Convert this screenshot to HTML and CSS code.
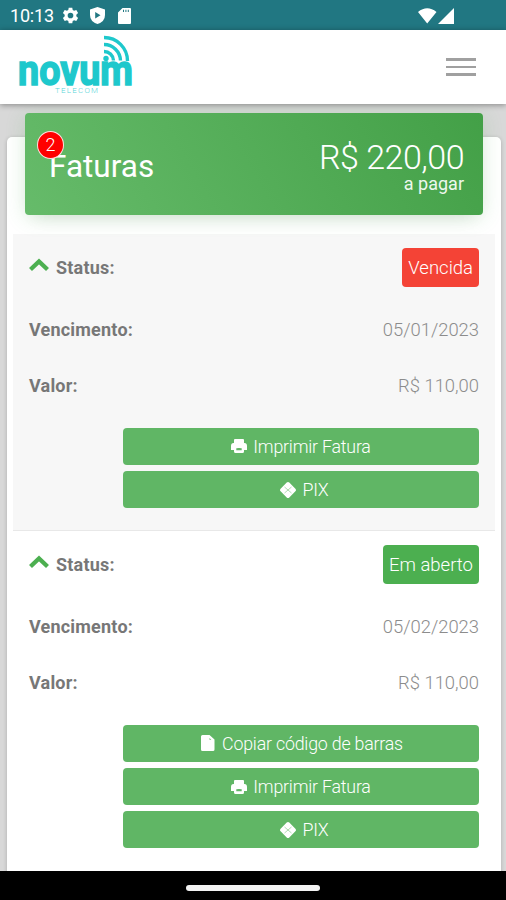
FILE: index.html
```html
<!DOCTYPE html>
<html lang="pt-BR">
<head>
<meta charset="utf-8">
<title>Faturas</title>
<link rel="stylesheet" href="styles.css">
</head>
<body>
<svg class="defs" aria-hidden="true">
  <symbol id="print" viewBox="0 0 16 16"><path d="M3 2Q3 1 4 1h8q1 0 1 1v3h.5Q16 5 16 8v4h-3v1.500q0 1.500-1.500 1.500h-7Q3 15 3 13.500V12H0V8Q0 5 2.500 5H3zM5.300 10.300v2h5.400v-2q-2.700-.8-5.400 0z"/></symbol>
  <symbol id="pix" viewBox="0 0 16 16"><path d="M8 0Q8.700 0 9.300.6L15.400 6.700Q16.600 8 15.400 9.300L9.300 15.400Q8 16.600 6.700 15.400L.6 9.300Q-.6 8 .6 6.700L6.700.6Q7.300 0 8 0z"/><path class="pix-line" d="M4.500 5L8 8l3.500-3M4.500 11L8 8l3.500 3"/></symbol>
  <symbol id="file" viewBox="0 0 14 16"><path d="M1.500 0h7L13.500 4.500V14.500q0 1.500-1.500 1.500h-10.500Q0 16 0 14.500v-13Q0 0 1.500 0zM8.500 3v1.700h1.800z" fill-rule="evenodd"/></symbol>
  <symbol id="chevron" viewBox="0 0 20 14"><path class="chevron-line" d="M1.500 11.500L10 3.500l8.500 8"/></symbol>
</svg>
<div class="statusbar">
  <span class="clock">10:13</span>
  <svg class="gear" viewBox="0 0 24 24"><path fill-rule="evenodd" d="M9.500 1h5l.6 3.200 2 1.200 3.100-1.100 2.500 4.300-2.500 2.200v2.400l2.500 2.200-2.500 4.300-3.100-1.100-2 1.200-.6 3.200h-5l-.6-3.200-2-1.200-3.100 1.100-2.500-4.300 2.500-2.200v-2.400L1.300 8.600l2.500-4.300 3.100 1.100 2-1.200zM12 8a4 4 0 100 8 4 4 0 000-8z"/></svg>
  <svg class="shield" viewBox="0 0 15 17"><path fill-rule="evenodd" d="M7.500 0L15 2.500V8q0 6.500-7.500 9Q0 14.500 0 8V2.500zM5.200 5v6.500l5.300-3.200z"/></svg>
  <svg class="sd" viewBox="0 0 13 16"><path fill-rule="evenodd" d="M4.500 0H12q1 0 1 1v14q0 1-1 1H1q-1 0-1-1V4.500zM5 1.700v2.400h1V1.700zm2.400 0v2.400h1V1.700zm2.400 0v2.400h1V1.700z"/></svg>
  <svg class="signal" viewBox="0 0 37 16"><path d="M0 4Q9.200-3.500 18.500 4L9.200 15.500zM20 16L36 0v16z"/></svg>
</div>
<header class="header">
  <svg class="logo" viewBox="0 0 118 62">
    <text class="logo-name" x="0" y="51.500" textLength="115" lengthAdjust="spacingAndGlyphs">novum</text>
    <text class="logo-sub" x="37" y="60" textLength="43" lengthAdjust="spacing">TELECOM</text>
    <circle cx="88" cy="25.500" r="2.700"/>
    <path class="wave" d="M86 18.500a9.500 9.500 0 0 1 9.500 9M86 11.500a16.500 16.500 0 0 1 16.500 16M86 4.500a23.500 23.500 0 0 1 23.500 23.500"/>
  </svg>
  <div class="burger"><i></i><i></i><i></i></div>
</header>
<main class="page">
  <section class="card">
    <div class="summary">
      <h1 class="title">Faturas<span class="badge">2</span></h1>
      <div class="total"><span class="amount">R$ 220,00</span><span class="caption">a pagar</span></div>
    </div>
    <article class="invoice shaded">
      <div class="row status"><b class="label"><svg class="chevron"><use href="#chevron"/></svg>Status:</b><span class="tag late">Vencida</span></div>
      <div class="row"><b class="label">Vencimento:</b><span class="value">05/01/2023</span></div>
      <div class="row"><b class="label">Valor:</b><span class="value">R$ 110,00</span></div>
      <div class="actions">
        <a class="button"><svg class="icon"><use href="#print"/></svg><span>Imprimir Fatura</span></a>
        <a class="button pix"><svg class="icon"><use href="#pix"/></svg><span>PIX</span></a>
      </div>
    </article>
    <article class="invoice">
      <div class="row status"><b class="label"><svg class="chevron"><use href="#chevron"/></svg>Status:</b><span class="tag open">Em aberto</span></div>
      <div class="row"><b class="label">Vencimento:</b><span class="value">05/02/2023</span></div>
      <div class="row"><b class="label">Valor:</b><span class="value">R$ 110,00</span></div>
      <div class="actions">
        <a class="button copy"><svg class="icon file"><use href="#file"/></svg><span>Copiar código de barras</span></a>
        <a class="button"><svg class="icon"><use href="#print"/></svg><span>Imprimir Fatura</span></a>
        <a class="button pix"><svg class="icon"><use href="#pix"/></svg><span>PIX</span></a>
      </div>
    </article>
  </section>
</main>
<footer class="navbar"><span class="handle"></span></footer>
</body>
</html>
```
FILE: styles.css
```css
* { box-sizing: border-box; }
body {
  margin: 0;
  width: 506px;
  height: 900px;
  overflow: hidden;
  display: flex;
  flex-direction: column;
  font-family: Roboto, "Liberation Sans", sans-serif;
  font-weight: 300;
  font-size: 18px;
  background: #d8d8d8;
}
.defs { position: absolute; width: 0; height: 0; }
.statusbar {
  flex: none;
  height: 30px;
  display: flex;
  align-items: center;
  padding: 1px 51px 0 10px;
  background: #217782;
  color: #fff;
  fill: #fff;
}
.clock { font-size: 18px; font-weight: 400; width: 52px; line-height: 30px; letter-spacing: -.2px; }
.gear { width: 17px; height: 17px; }
.shield { width: 15px; height: 17px; margin-left: 11px; }
.sd { width: 13px; height: 16px; margin-left: 13px; }
.signal { width: 37px; height: 16px; margin-left: auto; }
.header {
  flex: none;
  z-index: 1;
  height: 74px;
  display: flex;
  justify-content: space-between;
  align-items: flex-start;
  padding: 3px 30px 0 18px;
  background: #fff;
  box-shadow: 0 1px 6px rgba(0, 0, 0, .38);
}
.logo { width: 118px; height: 62px; fill: #1ec8cc; overflow: visible; }
.logo-name { font-size: 42px; font-weight: 700; stroke: #1ec8cc; stroke-width: 1.5; }
.logo-sub { font-size: 8px; font-weight: 300; fill: #5ad5d8; }
.wave { fill: none; stroke: #1ec8cc; stroke-width: 3.4; }
.burger { display: flex; flex-direction: column; gap: 5px; padding-top: 25px; }
.burger i { width: 30px; height: 2.500px; background: #a0a0a0; }
.page { flex: 1; min-height: 0; padding: 33px 5px 0 7px; }
.card {
  height: 760px;
  padding: 0 6px;
  background: #fff;
  border-radius: 5px;
  box-shadow: 0 1px 4px rgba(0, 0, 0, .2);
}
.summary {
  height: 102px;
  margin: 0 12px;
  transform: translateY(-24px);
  margin-bottom: -5px;
  padding: 0 19px 0 24px;
  display: flex;
  justify-content: space-between;
  border-radius: 4px;
  color: #fff;
  background: linear-gradient(60deg, #66bb6a, #43a047);
  box-shadow: 0 10px 20px -12px rgba(0, 0, 0, .12), 0 3px 20px rgba(76, 175, 80, .2);
}
.title {
  position: relative;
  margin: 35px 0 0;
  font-size: 31.500px;
  line-height: 38px;
  font-weight: 400;
}
.badge {
  position: absolute;
  left: -12px;
  top: -17px;
  width: 27px;
  height: 28px;
  border: 1px solid #ffdede;
  border-radius: 50%;
  background: #f00;
  font-size: 18px;
  font-weight: 300;
  line-height: 26px;
  text-align: center;
}
.total { display: flex; flex-direction: column; align-items: flex-end; padding-top: 24px; }
.amount { font-size: 34px; line-height: 40px; letter-spacing: -.5px; }
.caption { font-size: 18px; line-height: 20px; margin-top: -3px; font-weight: 400; color: #edf8ed; }
.invoice { height: 297px; padding: 0 16px; }
.shaded { background: #f7f7f7; border-bottom: 1px solid #e8e8e8; }
.row { height: 56px; display: flex; align-items: center; justify-content: space-between; }
.status { height: 67px; }
.label { display: flex; align-items: center; font-weight: 700; letter-spacing: .2px; color: #777; }
.chevron { width: 20px; height: 14px; margin: -5px 7px 0 0; }
.chevron-line { fill: none; stroke: #4caf50; stroke-width: 4.3; }
.value { padding-top: 1px; color: #8c8c8c; font-size: 18.400px; }
.tag {
  height: 39px;
  display: flex;
  align-items: center;
  padding: 0 6px;
  border-radius: 4px;
  font-size: 18.500px;
  color: #fff;
}
.late { background: #f44336; }
.open { background: #4caf50; }
.actions { display: flex; flex-direction: column; gap: 6.500px; padding: 15px 0 0 94px; }
.button {
  height: 36.700px;
  display: flex;
  align-items: center;
  justify-content: center;
  gap: 6px;
  border-radius: 4px;
  background: #60b665;
  font-size: 17.800px;
  letter-spacing: -.2px;
  color: #fff;
}
.copy { gap: 7px; padding-left: 2px; }
.pix { padding-left: 7px; }
.icon { width: 16px; height: 16px; fill: #fff; }
.file { width: 14px; }
.pix-line { fill: none; stroke: #60b665; stroke-width: .5; }
.navbar {
  flex: none;
  z-index: 1;
  height: 29px;
  display: flex;
  align-items: center;
  justify-content: center;
  padding-top: 4px;
  background: #000;
}
.handle { width: 134px; height: 6px; border-radius: 3px; background: #f3f3f3; }
```
